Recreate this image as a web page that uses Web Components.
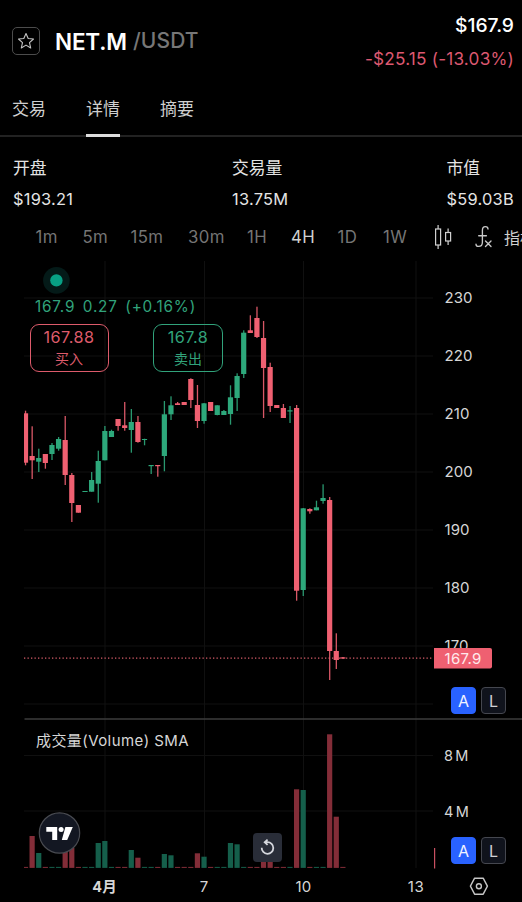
<!DOCTYPE html>
<html lang="zh-CN">
<head>
<meta charset="utf-8">
<title>NET.M/USDT</title>
<style>
    body{
        margin: 0;
        width: 522px;
        height: 902px;
        overflow: hidden;
        background: #000;
        color: #e4e4e4;
        font-family: Inter, "Noto Sans CJK SC", sans-serif;
        font-size: 17px;
    }
</style>
</head>
<body>
<market-page>
    <market-header base="NET.M" quote="/USDT" price="$167.9" change="-$25.15 (-13.03%)"></market-header>
    <market-tabs>
        <market-tab>交易</market-tab>
        <market-tab active>详情</market-tab>
        <market-tab>摘要</market-tab>
    </market-tabs>
    <market-stats>
        <market-stat label="开盘" style="width:219px">$193.21</market-stat>
        <market-stat label="交易量" style="width:214.5px">13.75M</market-stat>
        <market-stat label="市值">$59.03B</market-stat>
    </market-stats>
    <interval-bar></interval-bar>
    <price-chart>
        <chart-legend slot="legend">167.9 0.27 (+0.16%)</chart-legend>
        <quote-box slot="buy" price="167.88" style="--tone:#dd5b6b;--w:77px">买入</quote-box>
        <quote-box slot="sell" price="167.8" style="--tone:#31a37b;--w:68px">卖出</quote-box>
        <scale-toggle slot="price-scale"></scale-toggle>
        <scale-toggle slot="volume-scale"></scale-toggle>
    </price-chart>
</market-page>

<script>
class MarketPage extends HTMLElement{
    constructor(){
        super();
        this.attachShadow({mode: 'open'}).innerHTML =
        `
        <style>
            :host{
                display: flex;
                flex-direction: column;
                width: 522px;
                height: 902px;
                overflow: hidden;
            }
        </style>
        <slot></slot>`;
    }
}
customElements.define('market-page', MarketPage);

class MarketHeader extends HTMLElement{
    connectedCallback(){
        this.attachShadow({mode: 'open'}).innerHTML =
        `
        <style>
            :host{
                display: flex;
                box-sizing: border-box;
                height: 84px;
                padding: 0 8px 0 12px;
                justify-content: space-between;
            }
            .pair{
                display: flex;
                align-items: center;
                height: 82px;
            }
            .star{
                display: grid;
                place-items: center;
                box-sizing: border-box;
                width: 28px;
                height: 28px;
                border: 1px solid #4c4c4c;
                border-radius: 5px;
                margin-right: 15px;
            }
            .base{
                color: #fff;
                font-size: 22.5px;
                font-weight: 600;
                letter-spacing: -.2px;
                width: 78px;
            }
            .quote{
                color: #777;
                font-size: 21px;
                font-weight: 500;
                letter-spacing: .1px;
                padding-bottom: 2px;
            }
            .values{
                display: flex;
                flex-direction: column;
                align-items: flex-end;
                padding-top: 12px;
            }
            .price{
                color: #fff;
                font-size: 19.3px;
                font-weight: 500;
                line-height: 27px;
            }
            .change{
                color: #dc5870;
                font-size: 17.2px;
                letter-spacing: .2px;
                line-height: 39px;
            }
        </style>
        <div class="pair">
            <div class="star">
                <svg width="18" height="18" viewBox="0 0 18 18" fill="none" stroke="#c4c4c4" stroke-width="1.1" stroke-linejoin="round">
                    <path d="M9 1.5L11.2 6.5L16.5 7L12.5 10.6L13.7 16L9 13.1L4.3 16L5.5 10.6L1.5 7L6.8 6.5Z"/>
                </svg>
            </div>
            <span class="base">${this.getAttribute('base')}</span>
            <span class="quote">${this.getAttribute('quote')}</span>
        </div>
        <div class="values">
            <span class="price">${this.getAttribute('price')}</span>
            <span class="change">${this.getAttribute('change')}</span>
        </div>`;
    }
}
customElements.define('market-header', MarketHeader);

class MarketTabs extends HTMLElement{
    constructor(){
        super();
        this.attachShadow({mode: 'open'}).innerHTML =
        `
        <style>
            :host{
                display: flex;
                box-sizing: border-box;
                height: 53px;
                padding-left: 12px;
                gap: 40px;
                box-shadow: inset 0 -2px #222;
            }
        </style>
        <slot></slot>`;
    }
}
customElements.define('market-tabs', MarketTabs);

class MarketTab extends HTMLElement{
    constructor(){
        super();
        this.attachShadow({mode: 'open'}).innerHTML =
        `
        <style>
            :host{
                display: block;
                box-sizing: border-box;
                width: 34px;
                height: 53px;
                line-height: 50px;
                font-size: 17px;
                color: #cfcfcf;
                white-space: nowrap;
            }
            :host([active]){
                border-bottom: 3px solid #ddd;
            }
        </style>
        <slot></slot>`;
    }
}
customElements.define('market-tab', MarketTab);

class MarketStats extends HTMLElement{
    constructor(){
        super();
        this.attachShadow({mode: 'open'}).innerHTML =
        `
        <style>
            :host{
                display: flex;
                box-sizing: border-box;
                height: 79px;
                padding: 16px 0 0 13px;
            }
        </style>
        <slot></slot>`;
    }
}
customElements.define('market-stats', MarketStats);

class MarketStat extends HTMLElement{
    connectedCallback(){
        this.attachShadow({mode: 'open'}).innerHTML =
        `
        <style>
            :host{
                display: flex;
                flex-direction: column;
                flex: none;
                font-size: 16.4px;
                letter-spacing: .25px;
                line-height: 31px;
                white-space: nowrap;
            }
            .label{
                font-size: 16.8px;
                letter-spacing: 0;
            }
        </style>
        <span class="label">${this.getAttribute('label')}</span>
        <span><slot></slot></span>`;
    }
}
customElements.define('market-stat', MarketStat);

class IntervalBar extends HTMLElement{
    connectedCallback(){
        const intervals = [['1m', 47], ['5m', 48], ['15m', 57.5], ['30m', 59], ['1H', 44], ['4H', 46.5], ['1D', 45.5], ['1W', 51]];
        this.attachShadow({mode: 'open'}).innerHTML =
        `
        <style>
            :host{
                display: flex;
                align-items: center;
                box-sizing: border-box;
                height: 44px;
                padding: 0 0 3px 35.5px;
                font-size: 16.8px;
                letter-spacing: .4px;
                color: #757575;
                white-space: nowrap;
                overflow: hidden;
            }
            span, svg{
                flex: none;
            }
            .active, .label{
                color: #d0d0d0;
            }
            .fx{
                margin: 0 11px 0 21px;
            }
            .label{
                font-size: 16px;
                letter-spacing: 0;
            }
        </style>
        ${intervals.map(([name, width]) => `<span class="${name == '4H' ? 'active' : ''}" style="width:${width}px">${name}</span>`).join('')}
        <svg width="20" height="26" viewBox="0 0 20 26" fill="none" stroke="#d0d0d0" stroke-width="1.2">
            <rect x="1.6" y="5" width="5" height="16"/>
            <path d="M4.1 1V5M4.1 21V25M14.1 4.5V8.5M14.1 17V21"/>
            <rect x="11.6" y="8.5" width="5" height="8.5"/>
        </svg>
        <svg class="fx" width="18" height="24" viewBox="0 0 18 24" fill="none" stroke="#c8c8c8" stroke-width="1.35" stroke-linecap="round">
            <path d="M13 4C13 2.2 11.7 1.6 10.4 1.6C8 1.6 7.4 3.4 7.4 5.4V17.2C7.4 20 5.8 21.4 3.6 21.4C2 21.4 1 20.5 1 19.2M3.7 10.7H11.4M10.5 16L16 21.5M16 16L10.5 21.5"/>
        </svg>
        <span class="label">指标</span>`;
    }
}
customElements.define('interval-bar', IntervalBar);

class ChartLegend extends HTMLElement{
    constructor(){
        super();
        this.attachShadow({mode: 'open'}).innerHTML =
        `
        <style>
            :host{
                display: block;
                font-size: 15.3px;
                line-height: 18px;
                letter-spacing: .8px;
                word-spacing: 2.5px;
                color: #31a37b;
                white-space: nowrap;
            }
        </style>
        <slot></slot>`;
    }
}
customElements.define('chart-legend', ChartLegend);

class QuoteBox extends HTMLElement{
    connectedCallback(){
        this.attachShadow({mode: 'open'}).innerHTML =
        `
        <style>
            :host{
                display: flex;
                flex-direction: column;
                align-items: center;
                box-sizing: content-box;
                width: var(--w);
                height: 46px;
                border: 1.5px solid var(--tone);
                border-radius: 9px;
                color: var(--tone);
                font-size: 16.2px;
                letter-spacing: .5px;
            }
            .price{
                line-height: 25px;
            }
            .side{
                font-size: 14px;
                letter-spacing: 0;
                line-height: 18px;
            }
        </style>
        <span class="price">${this.getAttribute('price')}</span>
        <span class="side"><slot></slot></span>`;
    }
}
customElements.define('quote-box', QuoteBox);

class ScaleToggle extends HTMLElement{
    constructor(){
        super();
        this.attachShadow({mode: 'open'}).innerHTML =
        `
        <style>
            :host{
                display: flex;
                gap: 5px;
            }
            span{
                display: grid;
                place-items: center;
                box-sizing: border-box;
                width: 25px;
                height: 27px;
                border: 1px solid #45474f;
                border-radius: 4px;
                background: #10131c;
                color: #cfd0d4;
                font-size: 16px;
            }
            .on{
                border-color: #2962ff;
                background: #2962ff;
                color: #f0f3ff;
            }
        </style>
        <span class="on">A</span>
        <span>L</span>`;
    }
}
customElements.define('scale-toggle', ScaleToggle);

// [high, body top, body bottom, low, up] in page pixels
const CANDLES = [
    [410.7, 413.3, 462.7, 465.3, 0], [426.3, 456, 460.3, 479, 0], [448.7, 458, 461.7, 472, 1], [454, 454, 463, 468.7, 0],
    [443, 445, 454, 460, 1], [437, 439, 448.7, 450.7, 1], [416, 440, 475, 485, 0], [473, 475, 503, 522, 0],
    [505, 505, 512.7, 512.7, 0], [491, 491, 492, 492, 1], [472, 480, 491.7, 491.7, 1], [450.7, 461, 483.7, 502.7, 1],
    [426, 431, 460.3, 460.3, 1], [429.7, 431, 437, 437, 1], [419, 419, 426, 430.7, 0], [402, 425.3, 428, 430.7, 0],
    [409, 422, 430, 452.7, 1], [416, 422, 442, 442.7, 0], [438.7, 439, 440, 445.3, 1], [465, 465, 466.2, 474, 1],
    [465, 465, 466.2, 476.7, 0], [401, 414.3, 456, 471.3, 1], [396.3, 405.3, 414.3, 420, 1], [402, 403.3, 405, 405, 0],
    [402, 402, 405, 405, 0], [378.3, 379, 400, 408, 0], [385, 405, 421, 428, 0], [403, 403.3, 421, 423.7, 1],
    [402, 402, 411, 411, 0], [405.3, 405.3, 415, 415.3, 1], [410, 411, 415, 415, 1], [385.3, 397.3, 414, 424.7, 1],
    [373.3, 376, 398, 411, 1], [330.3, 332.7, 374, 378, 1], [315.3, 330.3, 333, 333, 0], [306.7, 318, 337, 338, 0],
    [321, 338, 368, 418, 0], [362.7, 367, 406, 412, 0], [405, 405, 408, 408, 0], [404, 408, 418, 418, 0],
    [406, 410.3, 411.5, 423, 1], [405, 408, 590.7, 600.7, 0], [508, 508.3, 590, 596, 1], [508.3, 509, 511.3, 513.7, 0],
    [500.7, 507.3, 510.3, 510.3, 1], [484.3, 498, 501, 503.7, 1], [497, 500, 651, 680, 0], [633.3, 651, 660, 669, 0],
    [657, 657.3, 658.6, 658.6, 0]
];

// tops of the volume bars that rise above the base line
const VOLUMES = {
    1: 836, 2: 853, 6: 846, 7: 848, 11: 843, 12: 841, 16: 850, 17: 857.7, 21: 854, 22: 855.3, 26: 853.3, 27: 856.7,
    31: 843, 32: 844.3, 36: 855, 37: 857, 41: 789.3, 42: 790, 46: 734.3, 47: 816.7
};

class PriceChart extends HTMLElement{
    connectedCallback(){
        this.attachShadow({mode: 'open'});
        this.render();
    }

    candles(){
        return CANDLES.map(([high, top, bottom, low, up], i) => {
            const x = 25.5 + i * 6.612;
            const left = Math.max(24, x - 2.6);
            return `<g fill="${up ? '#2da87b' : '#ef6071'}">
                <rect x="${x - .6}" y="${high}" width="1.3" height="${low - high}" opacity=".9"/>
                <rect x="${left}" y="${top}" width="${x + 2.6 - left}" height="${bottom - top}"/>
            </g>`;
        }).join('');
    }

    volumes(){
        return CANDLES.map((candle, i) => {
            const x = 25.5 + i * 6.612;
            const top = VOLUMES[i] || 866.9;
            const left = Math.max(24, x - 2.6);
            return `<rect x="${left}" y="${top}" width="${x + 2.6 - left}" height="${867.9 - top}" fill="${candle[4] ? '#155f4b' : '#832d38'}"/>`;
        }).join('');
    }

    grid(){
        const rows = [298, 356, 414, 472, 530, 588, 646, 704, 755.5, 811];
        const cols = [105, 204.5, 303.5, 416];
        return rows.map(y => `<path d="M24 ${y}H433"/>`).join('') + cols.map(x => `<path d="M${x} 261V868"/>`).join('');
    }

    render(){
        const prices = [230, 220, 210, 200, 190, 180, 170];
        this.shadowRoot.innerHTML =
        `
        <style>
            :host{
                display: block;
                position: relative;
                height: 642px;
            }
            .plot{
                display: block;
            }
            .plot text{
                font-size: 15px;
                letter-spacing: .1px;
                fill: #d6d6d6;
            }
            slot, .over{
                position: absolute;
                display: block;
            }
            slot[name=legend]{ left: 35px; top: 38px; }
            slot[name=buy]{ left: 29.5px; top: 63.5px; }
            slot[name=sell]{ left: 153px; top: 63.5px; }
            slot[name=price-scale]{ left: 451px; top: 427px; }
            slot[name=volume-scale]{ left: 451px; top: 577px; }
            .logo{ left: 38px; top: 551px; }
            .reset{ left: 253px; top: 573px; }
            .settings{ left: 469px; top: 616px; }
        </style>
        <svg class="plot" width="522" height="642" viewBox="0 260 522 642">
            <g stroke="#101010" stroke-width="1">${this.grid()}</g>
            <path d="M24.5 719H522" stroke="#3c3c3c" stroke-width="1.5"/>
            ${this.volumes()}
            <path d="M24 658.2H433" stroke="#d85d6a" stroke-width="1.2" stroke-dasharray="1.3 2.2"/>
            ${this.candles()}
            <path d="M434.6 848V868.5" stroke="#c95061" stroke-width="1.2"/>
            <circle cx="56.4" cy="280.4" r="13.3" fill="#041a18"/>
            <circle cx="56.4" cy="280.4" r="6.2" fill="#08a084"/>
            ${prices.map((p, i) => `<text x="444.5" y="${303.3 + i * 58}">${p}</text>`).join('')}
            <path d="M434 648H490Q492 648 492 650V666.5Q492 668.5 490 668.5H434Z" fill="#ef6071"/>
            <text x="444.5" y="663.8" style="fill:#ffe9eb;letter-spacing:.3px">167.9</text>
            <text x="36" y="746" style="letter-spacing:.42px">成交量(Volume) SMA</text>
            <text x="444" y="761" style="font-size:14.5px;word-spacing:-2px">8 M</text>
            <text x="444" y="817" style="font-size:14.5px;word-spacing:-2px">4 M</text>
            <g text-anchor="middle">
                <text x="104.5" y="892" style="font-weight:700;font-size:14.5px">4月</text>
                <text x="204" y="892">7</text>
                <text x="303.5" y="892">10</text>
                <text x="416" y="892" style="letter-spacing:.5px">13</text>
            </g>
        </svg>
        <slot name="legend"></slot>
        <slot name="buy"></slot>
        <slot name="sell"></slot>
        <slot name="price-scale"></slot>
        <slot name="volume-scale"></slot>
        <svg class="over logo" width="43" height="43" viewBox="0 0 43 43">
            <circle cx="21.5" cy="22" r="20.2" fill="#131722" stroke="#494b51" stroke-width="1.2"/>
            <path fill="#fff" d="M8.3 16H19.2V29H14.2V20.8H8.3ZM27.4 16H34.8L29.2 29H23.8Z"/>
            <circle cx="23.1" cy="18.4" r="2.5" fill="#fff"/>
        </svg>
        <svg class="over reset" width="29" height="29" viewBox="0 0 29 29">
            <rect width="29" height="29" rx="4" fill="#292d38"/>
            <path d="M8.7 14.8A5.8 5.8 0 1 0 14.5 9.2H11.8M14.6 6.6L11.7 9.2L14.6 11.9" fill="none" stroke="#d5d7dd" stroke-width="1.8"/>
        </svg>
        <svg class="over settings" width="20" height="20" viewBox="0 0 20 20" fill="none" stroke="#c6c6c6" stroke-width="1.4">
            <path d="M5.6 2.2H14.2L18.4 10.2L14.2 18.2H5.6L1.4 10.2Z" stroke-linejoin="round"/>
            <circle cx="9.9" cy="10.2" r="2.5"/>
        </svg>`;
    }
}
customElements.define('price-chart', PriceChart);
</script>
</body>
</html>
